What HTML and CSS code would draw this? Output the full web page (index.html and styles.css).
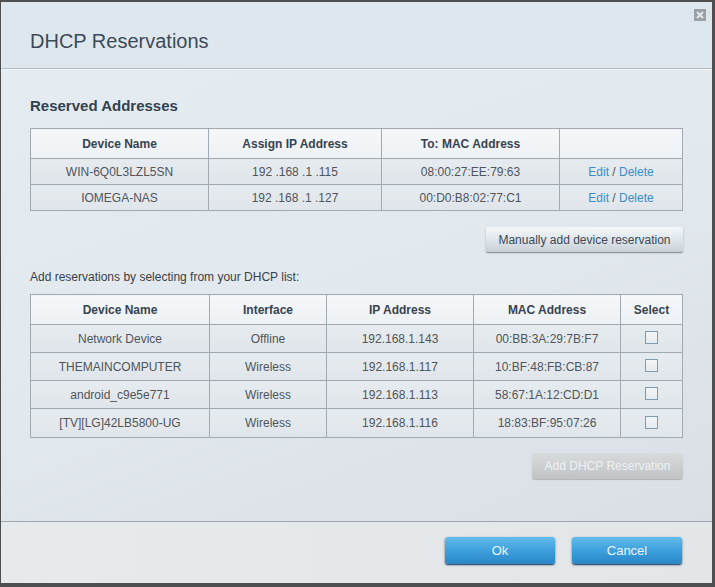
FILE: index.html
```html
<!DOCTYPE html>
<html>
<head>
<meta charset="utf-8">
<link rel="stylesheet" href="styles.css">
</head>
<body>
<div class="dialog">
  <div class="dlg-head">
    <h1 class="title">DHCP Reservations</h1>
    <span class="close" aria-label="Close">
      <svg width="12" height="12" viewBox="0 0 12 12"><rect width="12" height="12" fill="#9aa0a6"/><path d="M3 3 L9 9 M9 3 L3 9" stroke="#e4e8ec" stroke-width="2"/></svg>
    </span>
  </div>
  <div class="dlg-body">
    <h2 class="section">Reserved Addresses</h2>
    <table class="grid grid1">
      <colgroup><col class="c178"><col class="c173"><col class="c178"><col></colgroup>
      <thead><tr><th>Device Name</th><th>Assign IP Address</th><th>To: MAC Address</th><th></th></tr></thead>
      <tbody>
        <tr><td>WIN-6Q0L3LZL5SN</td><td>192 .168 .1 .115</td><td>08:00:27:EE:79:63</td><td><a class="lnk">Edit</a> / <a class="lnk">Delete</a></td></tr>
        <tr><td>IOMEGA-NAS</td><td>192 .168 .1 .127</td><td>00:D0:B8:02:77:C1</td><td><a class="lnk">Edit</a> / <a class="lnk">Delete</a></td></tr>
      </tbody>
    </table>
    <div class="btn-row">
      <button class="btn gray manual">Manually add device reservation</button>
    </div>
    <p class="hint">Add reservations by selecting from your DHCP list:</p>
    <table class="grid grid2">
      <colgroup><col class="c179"><col class="c117"><col class="c147"><col class="c147"><col></colgroup>
      <thead><tr><th>Device Name</th><th>Interface</th><th>IP Address</th><th>MAC Address</th><th>Select</th></tr></thead>
      <tbody>
        <tr><td>Network Device</td><td>Offline</td><td>192.168.1.143</td><td>00:BB:3A:29:7B:F7</td><td><span class="chk"></span></td></tr>
        <tr><td>THEMAINCOMPUTER</td><td>Wireless</td><td>192.168.1.117</td><td>10:BF:48:FB:CB:87</td><td><span class="chk"></span></td></tr>
        <tr><td>android_c9e5e771</td><td>Wireless</td><td>192.168.1.113</td><td>58:67:1A:12:CD:D1</td><td><span class="chk"></span></td></tr>
        <tr class="last"><td>[TV][LG]42LB5800-UG</td><td>Wireless</td><td>192.168.1.116</td><td>18:83:BF:95:07:26</td><td><span class="chk"></span></td></tr>
      </tbody>
    </table>
    <div class="btn-row add-row">
      <button class="btn disabled">Add DHCP Reservation</button>
    </div>
  </div>
  <div class="dlg-foot">
    <button class="btn blue">Ok</button>
    <button class="btn blue">Cancel</button>
  </div>
</div>
</body>
</html>
```
FILE: styles.css
```css
html, body { margin: 0; padding: 0; }
body {
  background: #4d4f51;
  width: 715px;
  height: 587px;
  overflow: hidden;
  font-family: "Liberation Sans", Arial, sans-serif;
}
.dialog {
  margin: 2px 0 0 1px;
  width: 711px;
  height: 581px;
  display: flex;
  flex-direction: column;
  background: #e3e8ec;
}
.dlg-head {
  position: relative;
  height: 67px;
  background: #dee7ee;
  border-bottom: 1px solid #b3bbc2;
  box-sizing: border-box;
  padding: 27px 0 0 29px;
}
.title {
  margin: 0;
  font-weight: normal;
  font-size: 20px;
  line-height: 24px;
  color: #3c4a57;
}
.close {
  position: absolute;
  top: 7px;
  right: 6px;
  width: 12px;
  height: 12px;
  line-height: 0;
}
.dlg-body {
  height: 453px;
  box-sizing: border-box;
  border-top: 1px solid #f4f6f8;
  border-bottom: 1px solid #9ea6ad;
  padding: 27px 29px 0 29px;
  background: linear-gradient(160deg, #e4ebf1 0%, #e1e8ee 50%, #d9dfe4 100%);
}
.section {
  margin: 0;
  font-size: 15px;
  line-height: 18px;
  font-weight: bold;
  color: #33414f;
}
.grid {
  width: 653px;
  border-collapse: collapse;
  table-layout: fixed;
  font-size: 12px;
  color: #50555b;
}
.grid1 { margin-top: 13px; }
.c178 { width: 178px; }
.c173 { width: 173px; }
.c179 { width: 179px; }
.c117 { width: 117px; }
.c147 { width: 147px; }
.grid th, .grid td {
  border: 1px solid #a2aab1;
  text-align: center;
  padding: 0;
  white-space: nowrap;
}
.grid th {
  height: 29px;
  font-weight: bold;
  color: #37434f;
  background: linear-gradient(#f5f7f9, #eef1f4);
}
.grid td {
  background: linear-gradient(#e6ebef, #dfe5ea);
}
.grid1 td { height: 25px; }
.grid2 td { height: 27px; }
.grid2 tr.last td { height: 28px; }
.lnk { color: #3b8dc6; text-decoration: none; }
.chk {
  display: inline-block;
  width: 11px;
  height: 11px;
  border: 1px solid #7d9cad;
  background: linear-gradient(#f3f6f8, #e4eaee);
  vertical-align: middle;
  margin-top: -3px;
}
.btn-row {
  display: flex;
  justify-content: flex-end;
  margin-top: 16px;
}
.btn {
  font-family: "Liberation Sans", Arial, sans-serif;
  border: none;
  padding: 0;
  cursor: default;
}
.btn.gray {
  height: 25px;
  width: 197px;
  font-size: 12px;
  color: #3b4a58;
  border-radius: 2px;
  background: linear-gradient(#f4f7f9 0%, #dde4e9 55%, #c9d1d7 100%);
  box-shadow: 0 1px 0 #8c959c, 0 1px 2px rgba(0,0,0,0.25);
}
.hint {
  margin: 17px 0 0 0;
  font-size: 12px;
  line-height: 16px;
  color: #3a3f44;
}
.grid2 { margin-top: 9px; }
.add-row { margin-top: 15px; }
.btn.disabled {
  height: 26px;
  width: 151px;
  font-size: 12px;
  color: #eef1f3;
  border-radius: 3px;
  background: linear-gradient(#d7dbde 0%, #c9cdd0 60%, #bfc3c6 100%);
  box-shadow: 0 1px 1px rgba(0,0,0,0.2);
}
.dlg-foot {
  flex: 1;
  display: flex;
  justify-content: flex-end;
  align-items: flex-start;
  gap: 17px;
  padding: 15px 30px 0 0;
  background: linear-gradient(90deg, #e7eaec, #e3e6e9);
}
.btn.blue {
  width: 110px;
  height: 27px;
  font-size: 13px;
  color: #eef7fd;
  border-radius: 3px;
  background: linear-gradient(#63bdec 0%, #3d9fdc 50%, #2a86c7 100%);
  box-shadow: 0 1px 1px #2d4d66, 0 1px 3px rgba(0,0,0,0.35);
}
```
